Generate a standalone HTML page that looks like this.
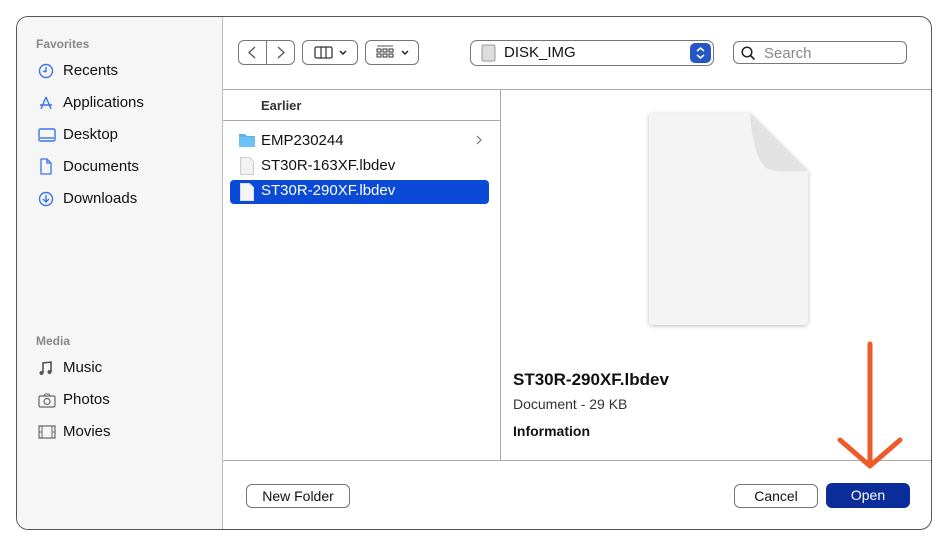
<!DOCTYPE html>
<html><head><style>
*{box-sizing:border-box;margin:0;padding:0}
body{width:948px;height:546px;background:#fff;font-family:"Liberation Sans",sans-serif;position:relative;overflow:hidden;color:#111}
.win{position:absolute;left:16px;top:16px;width:916px;height:514px;border:1px solid #555;border-radius:12px;overflow:hidden;background:#fff}
.side{position:absolute;left:0;top:0;width:206px;height:100%;background:#f6f6f6;border-right:1px solid #bbb}
.abs{position:absolute}
.sh{position:absolute;left:19px;font-size:12px;color:#888;font-weight:bold}
.si{position:absolute;left:46px;font-size:15px;color:#111}
.ic{position:absolute;left:21px}
.btn{position:absolute;border:1px solid #777;border-radius:6px;background:#fff;font-size:14px;text-align:center}
.t{position:absolute;font-size:15px}
</style></head><body>
<div class="win">
 <div class="side">
  <div class="sh" style="top:20px">Favorites</div>
  <svg class="ic" style="top:46px" width="16" height="16"><circle cx="8" cy="8" r="6.5" fill="none" stroke="#3b74e8" stroke-width="1.4"/><path d="M8 4v4.5H5" fill="none" stroke="#3b74e8" stroke-width="1.4"/></svg>
  <div class="si" style="top:45px">Recents</div>
  <svg class="ic" style="top:78px" width="16" height="16"><path d="M8 2L3 14M8 2l5 12M2 10h12" fill="none" stroke="#3b74e8" stroke-width="1.4"/></svg>
  <div class="si" style="top:77px">Applications</div>
  <svg class="ic" style="top:110px" width="18" height="16"><rect x="1" y="2" width="16" height="12" rx="1.5" fill="none" stroke="#3b74e8" stroke-width="1.4"/><path d="M2 11h14" stroke="#3b74e8" stroke-width="1.4"/></svg>
  <div class="si" style="top:109px">Desktop</div>
  <svg class="ic" style="top:141px" width="16" height="17"><path d="M3 1h6l4 4v11H3z M9 1v4h4" fill="none" stroke="#3b74e8" stroke-width="1.3"/></svg>
  <div class="si" style="top:141px">Documents</div>
  <svg class="ic" style="top:174px" width="16" height="16"><circle cx="8" cy="8" r="6.5" fill="none" stroke="#3b74e8" stroke-width="1.4"/><path d="M8 4v7M5 8l3 3 3-3" fill="none" stroke="#3b74e8" stroke-width="1.4"/></svg>
  <div class="si" style="top:173px">Downloads</div>
  <div class="sh" style="top:317px">Media</div>
  <svg class="ic" style="top:343px" width="16" height="16"><path d="M5 13V3l8-1v10" fill="none" stroke="#555" stroke-width="1.6"/><circle cx="3.5" cy="13" r="2" fill="#555"/><circle cx="11.5" cy="12" r="2" fill="#555"/></svg>
  <div class="si" style="top:342px">Music</div>
  <svg class="ic" style="top:375px" width="18" height="16"><rect x="1" y="4" width="16" height="11" rx="1.5" fill="none" stroke="#666" stroke-width="1.2"/><circle cx="9" cy="9.5" r="3" fill="none" stroke="#666" stroke-width="1.2"/><path d="M6 4l1-2h4l1 2" fill="none" stroke="#666"/></svg>
  <div class="si" style="top:374px">Photos</div>
  <svg class="ic" style="top:407px" width="18" height="16"><rect x="1" y="2" width="16" height="12" fill="none" stroke="#666" stroke-width="1.2"/><path d="M4 2v12M14 2v12M1 8h3M14 8h3" stroke="#666"/></svg>
  <div class="si" style="top:406px">Movies</div>
 </div>
 <!-- toolbar -->
 <div class="btn" style="left:221px;top:23px;width:29px;height:25px;border-radius:6px 0 0 6px"><svg width="27" height="23"><path d="M16 6l-6 5.5 6 5.5" fill="none" stroke="#555" stroke-width="1.3"/></svg></div>
 <div class="btn" style="left:249px;top:23px;width:29px;height:25px;border-radius:0 6px 6px 0"><svg width="27" height="23"><path d="M11 6l6 5.5-6 5.5" fill="none" stroke="#555" stroke-width="1.3"/></svg></div>
 <div class="btn" style="left:285px;top:23px;width:56px;height:25px"><svg width="54" height="23"><rect x="12" y="6" width="17" height="11" rx="1.5" fill="none" stroke="#333" stroke-width="1.3"/><path d="M18 6v11M23 6v11" stroke="#333" stroke-width="1.2"/><path d="M37 10l3 3 3-3" fill="none" stroke="#222" stroke-width="1.5"/></svg></div>
 <div class="btn" style="left:348px;top:23px;width:54px;height:25px"><svg width="52" height="23"><path d="M11 5h16" stroke="#555"/><g fill="none" stroke="#333" stroke-width="1"><rect x="11" y="8" width="4" height="3"/><rect x="17" y="8" width="4" height="3"/><rect x="23" y="8" width="4" height="3"/><rect x="11" y="13" width="4" height="3"/><rect x="17" y="13" width="4" height="3"/><rect x="23" y="13" width="4" height="3"/></g><path d="M36 10l3 3 3-3" fill="none" stroke="#222" stroke-width="1.5"/></svg></div>
 <div class="btn" style="left:453px;top:23px;width:244px;height:26px;text-align:left;border-radius:7px">
  <svg class="abs" style="left:10px;top:3px" width="16" height="19"><rect x="1" y="1" width="13" height="16" rx="1.5" fill="#ddd" stroke="#999"/></svg>
  <span class="abs" style="left:33px;top:3px;font-size:15px">DISK_IMG</span>
  <div class="abs" style="left:219px;top:2px;width:21px;height:20px;background:#2557c4;border-radius:5px"><svg width="21" height="20"><path d="M7 8l3.5-3 3.5 3M7 12l3.5 3 3.5-3" fill="none" stroke="#fff" stroke-width="1.5"/></svg></div>
 </div>
 <div class="btn" style="left:716px;top:24px;width:174px;height:23px;text-align:left;border-radius:6px">
  <svg class="abs" style="left:6px;top:3px" width="16" height="16"><circle cx="7" cy="7" r="4.8" fill="none" stroke="#222" stroke-width="1.5"/><path d="M10.5 10.5l4 4" stroke="#222" stroke-width="1.6"/></svg>
  <span class="abs" style="left:30px;top:3px;font-size:15px;color:#888">Search</span>
 </div>
 <div class="abs" style="left:206px;top:72px;width:710px;height:1px;background:#aaa"></div>
 <!-- list -->
 <div class="abs" style="left:244px;top:81px;font-size:13px;color:#333;font-weight:bold">Earlier</div>
 <div class="abs" style="left:206px;top:103px;width:277px;height:1px;background:#aaa"></div>
 <div class="abs" style="left:483px;top:72px;width:1px;height:371px;background:#aaa"></div>
 <svg class="abs" style="left:221px;top:115px" width="18" height="16"><path d="M1 2h6l2 2h8v11H1z" fill="#5ab0f0"/><path d="M1 5h16v10H1z" fill="#6ec0f6"/></svg>
 <div class="t" style="left:244px;top:115px">EMP230244</div>
 <svg class="abs" style="left:458px;top:117px" width="8" height="12"><path d="M2 2l4 4-4 4" fill="none" stroke="#777" stroke-width="1.2"/></svg>
 <svg class="abs" style="left:223px;top:140px" width="14" height="18"><path d="M0.5 0.5h9l4 4v13h-13z" fill="#f2f2f2" stroke="#ccc"/></svg>
 <div class="t" style="left:244px;top:140px">ST30R-163XF.lbdev</div>
 <div class="abs" style="left:213px;top:163px;width:259px;height:24px;background:#0a4ad6;border-radius:4px"></div>
 <svg class="abs" style="left:223px;top:166px" width="14" height="18"><path d="M0.5 0.5h9l4 4v13h-13z" fill="#f5f5f5" stroke="#ddd"/></svg>
 <div class="t" style="left:244px;top:165px;color:#fff">ST30R-290XF.lbdev</div>
 <!-- preview -->
 <svg class="abs" style="left:628px;top:92px" width="170" height="222">
  <defs><filter id="s"><feDropShadow dx="0" dy="1" stdDeviation="2" flood-opacity="0.25"/></filter></defs>
  <path d="M8 4h97l58 58v150a4 4 0 0 1-4 4H8a4 4 0 0 1-4-4V8a4 4 0 0 1 4-4z" fill="#f4f4f4" filter="url(#s)"/>
  <path d="M105 4c2 30 8 50 18 56 10 4 30 2 40 2z" fill="#e2e2e2"/>
 </svg>
 <div class="abs" style="left:496px;top:353px;font-size:17px;font-weight:bold">ST30R-290XF.lbdev</div>
 <div class="abs" style="left:496px;top:379px;font-size:14px;color:#333">Document - 29 KB</div>
 <div class="abs" style="left:496px;top:406px;font-size:14px;font-weight:bold">Information</div>
 <!-- bottom -->
 <div class="abs" style="left:206px;top:443px;width:710px;height:1px;background:#aaa"></div>
 <div class="btn" style="left:229px;top:467px;width:104px;height:24px;line-height:22px">New Folder</div>
 <div class="btn" style="left:717px;top:467px;width:84px;height:24px;line-height:22px">Cancel</div>
 <div class="abs" style="left:809px;top:466px;width:84px;height:25px;line-height:25px;background:#0a2d9a;color:#fff;border-radius:6px;font-size:14px;text-align:center">Open</div>
</div>
<svg class="abs" style="left:830px;top:340px" width="80" height="132"><path d="M40 4v120M10 100l30 26 30-26" fill="none" stroke="#ef5a2a" stroke-width="5" stroke-linecap="round" stroke-linejoin="round"/></svg>
</body></html>
